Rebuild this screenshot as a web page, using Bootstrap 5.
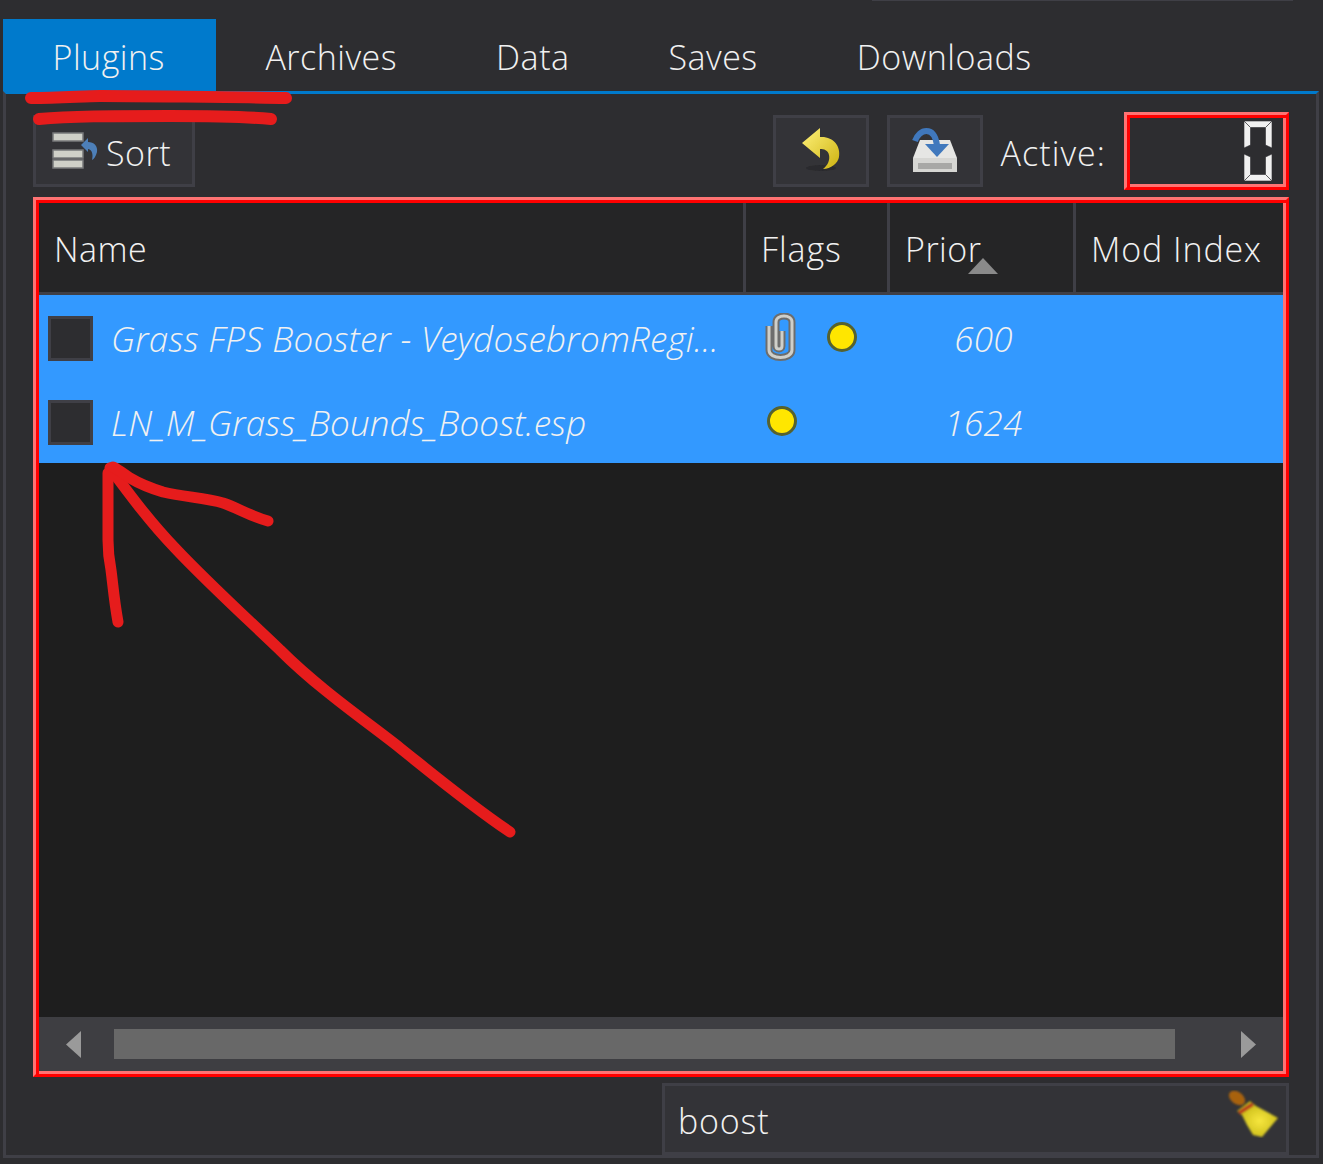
<!DOCTYPE html>
<html lang="en">
<head>
<meta charset="utf-8">
<title>Plugins</title>
<link href="https://cdn.jsdelivr.net/npm/bootstrap@5.3.0/dist/css/bootstrap.min.css" rel="stylesheet">
<style>
html,body{height:1164px;overflow:hidden}
body{background:#2d2d30;color:#f1f1f1;font-family:"Open Sans","Noto Sans",sans-serif;font-size:34px;position:relative;font-weight:300;letter-spacing:.5px}
.app-shell{height:1158px;padding:0 4px 0 3px}
.top-hairline{height:1px;width:421px;background:#3f3f46;margin-left:869px}
.tab-strip{margin-top:18px;height:72px;flex-wrap:nowrap}
.tab-strip .nav-link{height:72px;padding:5px 49.5px 0;color:#f1f1f1;border-radius:0;display:flex;align-items:center;font-size:34px}
.tab-strip .nav-link.active{background:#007acc;color:#f1f1f1;padding-right:51px}
.pane-frame{border:3px solid #3f3f46;border-top-color:#007acc;padding:18px 27px 0;gap:6px;min-height:0}
.tool-row{height:78px;flex:none;margin-bottom:1px}
.tool-btn{height:72px;background:#333337;border:3px solid #3f3f46;border-radius:0;color:#f1f1f1;font-size:34px;font-weight:300;letter-spacing:.5px;padding:0;display:flex;align-items:center;justify-content:center}
.tool-btn:hover{background:#333337;color:#f1f1f1;border-color:#3f3f46}
.sort-btn{width:162px;gap:8px;padding:0 0 0 16px;justify-content:flex-start}
.sort-label{padding-top:4px}
.icon-btn{width:96px}
.gap-18{gap:18px}
.active-label{padding-top:4px;letter-spacing:1.05px}
.red-frame{border:3px solid #f00;border-top-color:#ff7373;border-left-color:#ff7373;box-shadow:inset 3px 3px 0 #f00,inset -3px -3px 0 #ff7373}
.lcd-box{width:165px;height:78px;padding:6px 14px 6px 0;background:#2d2d30}
.grid-frame{padding:3px;background:#1e1e1e}
.plugin-grid{--bs-table-bg:transparent;--bs-table-color:#f1f1f1;--bs-table-border-color:transparent;border-collapse:separate;border-spacing:0;table-layout:fixed;width:1244px;margin:0;color:#f1f1f1}
.col-name{width:707px}
.col-flags{width:144px}
.col-prior{width:186px}
.col-modidx{width:207px}
.plugin-grid th,.plugin-grid td{padding:0;border:0;font-weight:300;vertical-align:middle;box-shadow:none}
.plugin-grid thead th{height:92px;background:#252526;color:#f1f1f1;border-bottom:3px solid #3f3f46;padding:4px 0 0 15px;border-right:3px solid #3f3f46;position:relative;white-space:nowrap}
.plugin-grid thead th:first-child{padding-left:15px}
.plugin-grid thead th:last-child{border-right:0}
.plugin-grid thead th.tight-head{letter-spacing:.9px}
.plugin-grid tbody td{height:84px;background:#3399ff;color:#f1f1f1;font-style:italic;font-size:35px;letter-spacing:.25px;white-space:nowrap}
.plugin-grid tbody td.prio-cell{padding-top:5px;padding-left:1px}
.name-text{padding-top:5px}
.name-text.short-name{letter-spacing:.15px}
.sort-caret{position:absolute;left:78px;top:55px}
.row-check{appearance:none;width:45px;height:45px;margin:2px 18px 0 9px;background:#2d2d30;border:3px solid #3f3f46;border-radius:0;flex:none;display:block}
.name-cell{display:flex;align-items:center}
.flags-cell{display:flex;align-items:center;height:84px;padding-left:21px}
.flag-dot{display:inline-block;width:30px;height:30px;border-radius:50%;background:#ffe600;border:3px solid #56622f;flex:none}
.clip-icon{flex:none;margin-left:-3px}
.gap-30{gap:30px}
.empty-area{min-height:0}
.h-scroll{height:54px;background:#3e3e42;flex:none}
.scroll-left{width:75px;padding-left:27px}
.scroll-right{flex:1;padding-left:66px}
.scroll-thumb{width:1061px;height:30px;background:#686868}
.filter-wrap{height:72px;flex:none}
.filter-box{width:627px;height:72px;background:#333337;border:3px solid #3f3f46;border-radius:0;color:#f1f1f1;font-size:34px;font-weight:300;letter-spacing:.8px;padding:4px 13px 0;display:flex;align-items:center;position:relative}
.broom-icon{position:absolute;left:562px;top:4px}
.scribble{position:absolute;left:0;top:0;pointer-events:none}
</style>
</head>
<body>
<div class="app-shell d-flex flex-column">
  <div class="top-hairline"></div>
  <ul class="nav tab-strip">
    <li class="nav-item"><a class="nav-link active" href="#">Plugins</a></li>
    <li class="nav-item"><a class="nav-link" href="#">Archives</a></li>
    <li class="nav-item"><a class="nav-link" href="#">Data</a></li>
    <li class="nav-item"><a class="nav-link" href="#">Saves</a></li>
    <li class="nav-item"><a class="nav-link" href="#">Downloads</a></li>
  </ul>
  <div class="pane-frame flex-grow-1 d-flex flex-column">
    <div class="tool-row d-flex align-items-center">
      <button class="btn tool-btn sort-btn" type="button">
        <svg width="46" height="38" viewBox="0 0 46 38" aria-hidden="true">
          <defs><filter id="soft1"><feGaussianBlur stdDeviation=".6"/></filter></defs>
          <g filter="url(#soft1)">
          <g fill="#cfd0c8" stroke="#77787a" stroke-width="1.5"><rect x="1" y="1" width="30" height="8"/><rect x="1" y="18" width="30" height="8"/><rect x="1" y="28" width="30" height="8"/></g>
          <path d="M29 13 L36 6 V10 C42 10 46 14 45 20 C44 24 42 27 40 28 C41 24 41 18 36 17 V20 Z" fill="#4d7fb8"/>
          </g>
        </svg>
        <span class="sort-label">Sort</span>
      </button>
      <div class="ms-auto d-flex align-items-center gap-18">
        <button class="btn tool-btn icon-btn" type="button" aria-label="Undo">
          <svg width="48" height="48" viewBox="0 0 48 48" aria-hidden="true">
            <defs><linearGradient id="yel" x1="0" y1="0" x2="1" y2="1"><stop offset="0" stop-color="#fff27a"/><stop offset="1" stop-color="#cdb211"/></linearGradient></defs>
            <ellipse cx="24" cy="41" rx="15" ry="3" fill="#2a2a2d" filter="url(#soft1)"/>
            <path filter="url(#soft1)" d="M5 16 L23 1 V10 C36 9 44 19 42 30 C41 36 34 42 26 42 C31 38 33 33 32 28 C31 23 27 22 23 22 V31 Z" fill="url(#yel)"/>
          </svg>
        </button>
        <button class="btn tool-btn icon-btn" type="button" aria-label="Save">
          <svg width="48" height="48" viewBox="0 0 48 48" aria-hidden="true">
            <g filter="url(#soft1)">
            <path d="M9 13 H39 L46 31 V45 H2 V31 Z" fill="#e6e6e4"/>
            <rect x="2" y="31" width="44" height="14" fill="#d6d6d3"/>
            <path d="M7 36 H41 V42 H7 Z" fill="#a8a8a6"/>
            <path d="M4 14 C8 2 23 -2 26 18" fill="none" stroke="#3f78bd" stroke-width="6"/>
            <path d="M14 17 H38 L26 30 Z" fill="#3f78bd"/>
            </g>
          </svg>
        </button>
        <span class="active-label">Active:</span>
        <div class="lcd-box red-frame d-flex justify-content-end" role="img" aria-label="0">
          <svg width="28" height="60" viewBox="0 0 28 60" aria-hidden="true">
            <g fill="#f0f0f0" stroke="#2d2d30" stroke-width=".6">
              <polygon points="0,0 28,0 21.5,6.5 6.5,6.5"/>
              <polygon points="0,0 6.5,6.5 6.5,24 0,27"/>
              <polygon points="28,0 21.5,6.5 21.5,24 28,27"/>
              <polygon points="0,33 6.5,36 6.5,53.5 0,60"/>
              <polygon points="28,33 21.5,36 21.5,53.5 28,60"/>
              <polygon points="6.5,53.5 21.5,53.5 28,60 0,60"/>
            </g>
          </svg>
        </div>
      </div>
    </div>
    <div class="grid-frame red-frame flex-grow-1 d-flex flex-column">
      <table class="table plugin-grid">
        <colgroup><col class="col-name"><col class="col-flags"><col class="col-prior"><col class="col-modidx"></colgroup>
        <thead><tr><th>Name</th><th class="tight-head">Flags</th><th>Prior<svg class="sort-caret" width="30" height="16" viewBox="0 0 30 16" aria-hidden="true"><polygon points="15,0 30,16 0,16" fill="#8a8a8a"/></svg></th><th class="tight-head">Mod Index</th></tr></thead>
        <tbody>
          <tr>
            <td><div class="name-cell"><input class="row-check" type="checkbox" aria-label="Enable"><span class="name-text">Grass FPS Booster - VeydosebromRegi…</span></div></td>
            <td><div class="flags-cell gap-30">
              <svg class="clip-icon" width="33" height="48" viewBox="0 0 33 48" aria-hidden="true">
                <path d="M18 18 V33 C18 37 12 37 12 33 V9 C12 1 28 1 28 9 V37 C28 47 5 47 5 37 V13" fill="none" stroke="#6d6d6d" stroke-width="7"/>
                <path d="M18 18 V33 C18 37 12 37 12 33 V9 C12 1 28 1 28 9 V37 C28 47 5 47 5 37 V13" fill="none" stroke="#cfcfca" stroke-width="3"/>
              </svg>
              <span class="flag-dot"></span></div></td>
            <td class="text-center prio-cell">600</td>
            <td></td>
          </tr>
          <tr>
            <td><div class="name-cell"><input class="row-check" type="checkbox" aria-label="Enable"><span class="name-text short-name">LN_M_Grass_Bounds_Boost.esp</span></div></td>
            <td><div class="flags-cell"><span class="flag-dot"></span></div></td>
            <td class="text-center prio-cell">1624</td>
            <td></td>
          </tr>
        </tbody>
      </table>
      <div class="empty-area flex-grow-1"></div>
      <div class="h-scroll d-flex align-items-center">
        <div class="scroll-left d-flex"><svg width="15" height="27" viewBox="0 0 15 27" aria-hidden="true"><polygon points="15,0 15,27 0,13.5" fill="#9a9a9a"/></svg></div>
        <div class="scroll-thumb"></div>
        <div class="scroll-right d-flex"><svg width="15" height="27" viewBox="0 0 15 27" aria-hidden="true"><polygon points="0,0 0,27 15,13.5" fill="#9a9a9a"/></svg></div>
      </div>
    </div>
    <div class="filter-wrap d-flex justify-content-end">
      <div class="form-control filter-box">boost
        <svg class="broom-icon" width="52" height="48" viewBox="0 0 52 48" aria-hidden="true">
          <defs><radialGradient id="brm" cx=".55" cy=".55" r=".6"><stop offset="0" stop-color="#f7e73e"/><stop offset="1" stop-color="#c2b312"/></radialGradient><filter id="soft"><feGaussianBlur stdDeviation=".9"/></filter></defs>
          <g filter="url(#soft)">
            <ellipse cx="10" cy="8" rx="9" ry="6" transform="rotate(35 10 8)" fill="#a8620f"/>
            <path d="M10 21 L23 11 L29 16 L51 28 L35 47 L26 45 L20 35 L15 25 Z" fill="url(#brm)"/>
            <path d="M12 23 L26 14" stroke="#b8401c" stroke-width="4"/>
          </g>
        </svg>
      </div>
    </div>
  </div>
</div>
<svg class="scribble" width="1323" height="1164" viewBox="0 0 1323 1164" aria-hidden="true">
  <g fill="none" stroke="#e61c1c" stroke-linecap="round" stroke-linejoin="round">
    <path stroke-width="12" d="M31 98 C60 98 85 96 100 96 S250 97 286 98"/>
    <path stroke-width="12" d="M39 119 C70 116 110 116 170 116 S250 117 271 119"/>
    <path stroke-width="11" d="M510 832 C470 805 440 780 400 748 C370 724 320 690 280 650 C240 612 205 580 175 548 C150 522 130 495 110 468"/>
    <path stroke-width="11" d="M118 622 C114 600 113 585 111 570 C108 555 108 550 108 540 L108 473"/>
    <path stroke-width="11" d="M268 521 C250 516 238 508 223 503 C205 498 185 497 163 492 C150 488 140 484 130 478 C124 474 119 470 113 467"/>
  </g>
</svg>
</body>
</html>
